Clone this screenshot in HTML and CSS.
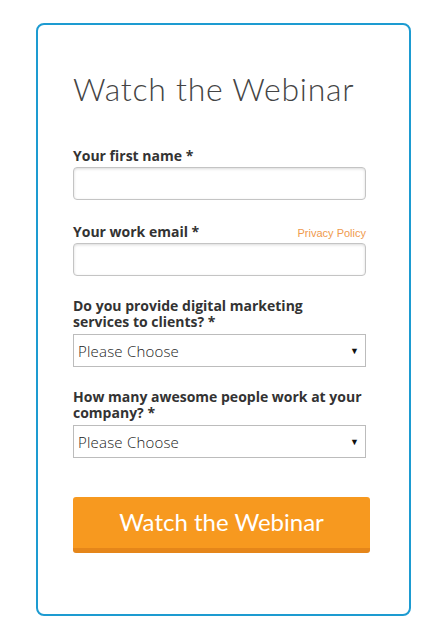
FILE: index.html
```html
<!DOCTYPE html>
<html>
<head>
<meta charset="utf-8">
<link rel="stylesheet" href="styles.css">
</head>
<body>
<div class="card">
  <h1 class="title">Watch the Webinar</h1>
  <form class="form">
    <div class="field">
      <div class="label-row"><label class="label">Your first name *</label></div>
      <div class="input"></div>
    </div>
    <div class="field">
      <div class="label-row"><label class="label">Your work email *</label><a class="privacy">Privacy Policy</a></div>
      <div class="input"></div>
    </div>
    <div class="field">
      <label class="label multi">Do you provide digital marketing<br>services to clients? *</label>
      <div class="select"><span>Please Choose</span><span class="arrow">▼</span></div>
    </div>
    <div class="field">
      <label class="label multi">How many awesome people work at your company? *</label>
      <div class="select"><span>Please Choose</span><span class="arrow">▼</span></div>
    </div>
    <div class="button">Watch the Webinar</div>
  </form>
</div>
</body>
</html>
```
FILE: styles.css
```css
* { box-sizing: border-box; }
html, body { margin: 0; padding: 0; background: #fff; }
body { padding: 23px 0 0 36px; }
.card {
  width: 375px;
  height: 593px;
  border: 2px solid #1d9bd1;
  border-radius: 8px;
  padding: 0 0 0 35px;
}
.title {
  margin: 46px 0 0 0;
  font-family: "Lato", sans-serif;
  font-weight: 300;
  font-size: 32px;
  color: #444;
  letter-spacing: 0.75px;
  line-height: 36px;
}
.form { width: 293px; margin-top: 40px; }
.field { margin-bottom: 23px; }
.label-row { display: flex; justify-content: space-between; align-items: baseline; }
.label {
  display: block;
  font-family: "Open Sans", sans-serif;
  font-weight: 700;
  font-size: 14px;
  color: #333;
  line-height: 18px;
  margin-bottom: 2px;
}
.label.multi { line-height: 16px; width: 293px; margin: -1px 0 4px; }
.privacy {
  font-family: "Liberation Sans", Arial, sans-serif;
  font-size: 11px;
  color: #ef9a4d;
}
.input {
  height: 33px;
  border: 1px solid #c4c4c4;
  border-radius: 4px;
  box-shadow: inset 0 1px 3px rgba(0,0,0,0.15);
}
.select {
  height: 33px;
  border: 1px solid #bcbcbc;
  display: flex;
  align-items: center;
  justify-content: space-between;
  padding: 0 6px 0 4px;
  font-family: "Open Sans", sans-serif;
  font-weight: 300;
  font-size: 15px;
  letter-spacing: 0.2px;
  color: #222;
}
.arrow { font-size: 9px; color: #111; }
.button {
  margin-top: 39px;
  width: 297px;
  height: 56px;
  background: #f7991f;
  border-radius: 3px;
  border-bottom: 5px solid #e5861a;
  color: #fff;
  font-family: "Lato", sans-serif;
  font-size: 24px;
  text-align: center;
  line-height: 50px;
}
```
